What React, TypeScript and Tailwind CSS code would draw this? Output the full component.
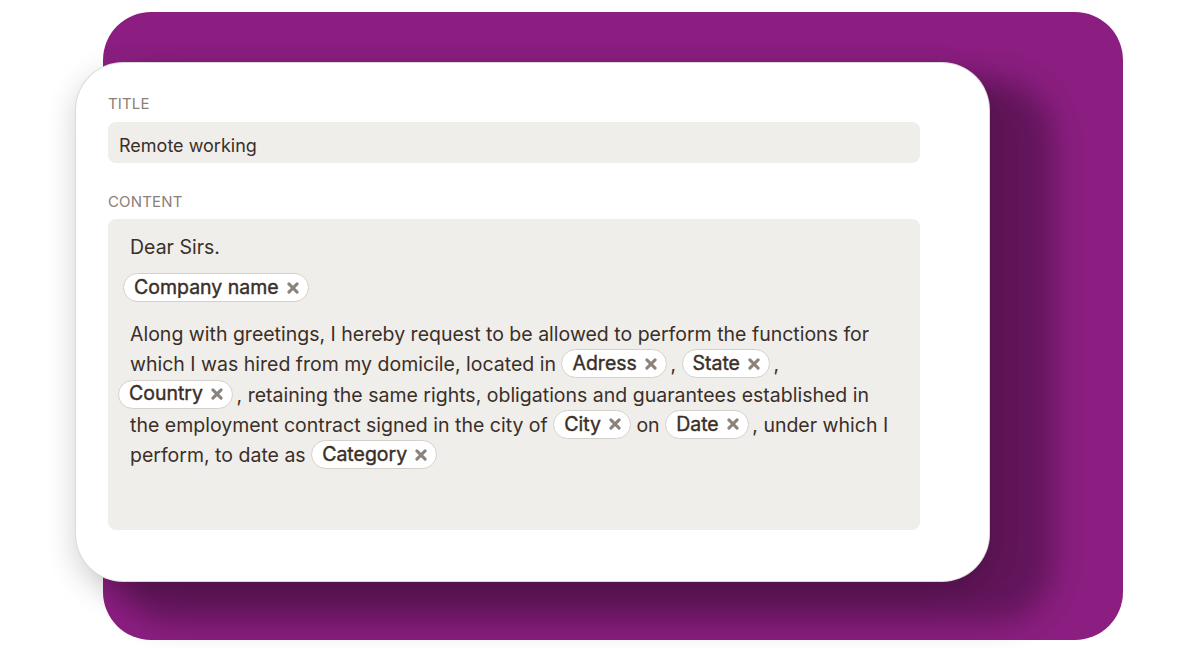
const XIcon = () => (
  <svg width="12" height="12" viewBox="0 0 12 12" className="shrink-0">
    <path d="M1.9 1.9 L10.1 10.1 M10.1 1.9 L1.9 10.1" stroke="#8b827b" strokeWidth="3" strokeLinecap="round" fill="none" />
  </svg>
);

function Chip({ label, className = "" }: { label: string; className?: string }) {
  return (
    <span
      className={`inline-flex items-center align-top h-[29px] pl-[10px] pr-[9px] gap-[8px] rounded-full bg-white border border-[#d6d0ca] leading-none [-webkit-text-stroke:0.4px_#3b2f28] ${className}`}
    >
      {label}
      <XIcon />
    </span>
  );
}

export default function App() {
  return (
    <div className="w-[1200px] h-[649px] bg-white overflow-hidden grid font-['Inter',sans-serif] text-[#3b2f28]">
      <div className="[grid-area:1/1] ml-[103px] mt-[12px] w-[1020px] h-[628px] rounded-[48px] bg-[#8b1e80]" />

      <div className="[grid-area:1/1] ml-[75px] mt-[62px] w-[915px] h-[520px] rounded-[48px] bg-white border border-black/15 pl-[32px] pt-[33px] shadow-[52px_29px_30px_11px_rgba(0,0,0,0.3),0_10px_30px_rgba(0,0,0,0.18)] flex flex-col">
        <div className="text-[15px] leading-[16px] uppercase text-[#8a8079] tracking-[0.01em]">Title</div>
        <div className="mt-[10px] w-[812px] h-[41px] rounded-[8px] bg-[#efeeeb] pl-[11px] pt-[6px] flex items-center text-[18px]">
          Remote working
        </div>

        <div className="mt-[31px] text-[15px] leading-[16px] uppercase text-[#8a8079] tracking-[0.01em]">Content</div>
        <div className="mt-[9px] w-[812px] h-[311px] rounded-[8px] bg-[#efeeeb] px-[22px] pt-[13px] text-[19.5px]">
          <p className="leading-[30px]">Dear Sirs.</p>
          <div className="mt-[11px] flex">
            <Chip label="Company name" className="-ml-[7px]" />
          </div>
          <p className="mt-[17px] leading-[30.3px] whitespace-nowrap">
            Along with greetings, I hereby request to be allowed to perform the functions for
            <br />
            which I was hired from my domicile, located in <Chip label="Adress" />{"\u2009, "}<Chip label="State" />{"\u2009,"}
            <br />
            <Chip label="Country" className="-ml-[12px]" />{"\u2009, "}retaining the same rights, obligations and guarantees established in
            <br />
            the employment contract signed in the city of <Chip label="City" /> on <Chip label="Date" />{"\u2009, "}under which I
            <br />
            perform, to date as <Chip label="Category" />
          </p>
        </div>
      </div>
    </div>
  );
}
